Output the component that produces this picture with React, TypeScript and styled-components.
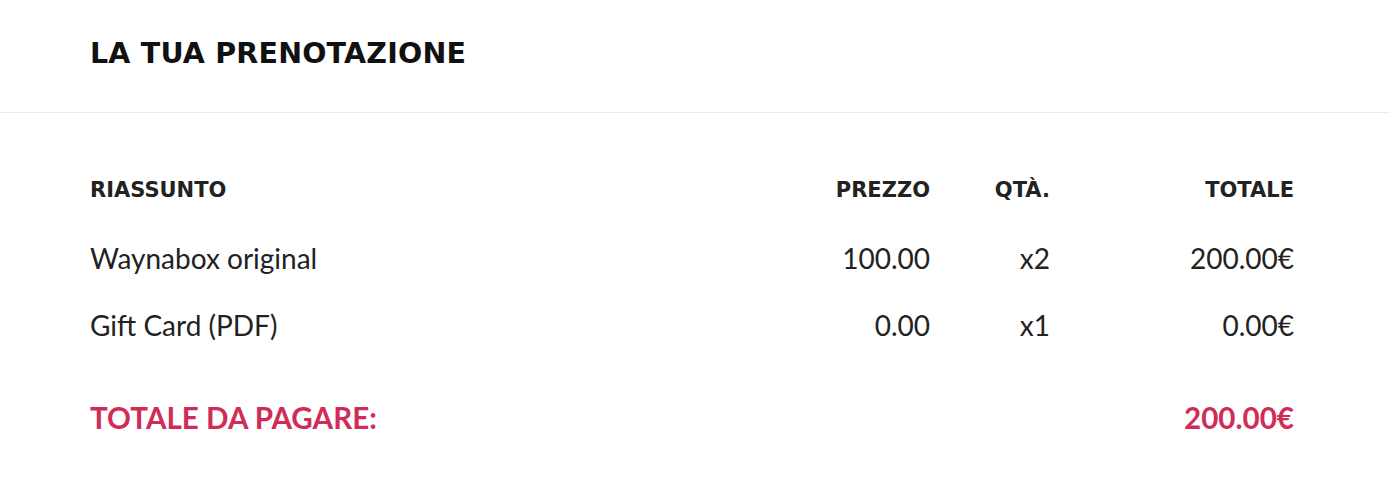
import React from 'react';
import styled, { createGlobalStyle } from 'styled-components';

const GlobalStyle = createGlobalStyle`
  html, body {
    margin: 0;
    padding: 0;
    background: #fff;
  }
  body {
    font-family: Lato, "Liberation Sans", sans-serif;
    color: #222;
  }
`;

const ACCENT = '#d12c57';

const Header = styled.div`
  display: flex;
  align-items: center;
  height: 106px;
  padding: 0 90px 6px;
  border-bottom: 1px solid #ebebeb;
`;

const Title = styled.h1`
  margin: 0;
  font-family: "DejaVu Sans", sans-serif;
  font-weight: 700;
  font-size: 28.5px;
  color: #111;
  letter-spacing: 0.2px;
`;

const Summary = styled.div`
  padding: 53px 96px 0 90px;
`;

const Row = styled.div<{ $kind?: 'head' | 'item' | 'total' }>`
  display: grid;
  grid-template-columns: 1fr 200px 120px 244px;
  align-items: center;
  height: ${p => (p.$kind === 'head' ? 48 : 67)}px;
  margin-bottom: ${p => (p.$kind === 'head' ? 10 : 0)}px;
  margin-top: ${p => (p.$kind === 'total' ? 26 : 0)}px;
`;

const HeadCell = styled.div<{ $right?: boolean }>`
  font-family: "DejaVu Sans", sans-serif;
  font-weight: 700;
  font-size: 21px;
  color: #222;
  text-align: ${p => (p.$right ? 'right' : 'left')};
`;

const Cell = styled.div<{ $right?: boolean }>`
  font-size: 28px;
  color: #222;
  text-align: ${p => (p.$right ? 'right' : 'left')};
`;

const TotalCell = styled.div<{ $right?: boolean }>`
  font-size: 29.6px;
  font-weight: 700;
  color: ${ACCENT};
  grid-column: ${p => (p.$right ? '4' : '1 / 4')};
  text-align: ${p => (p.$right ? 'right' : 'left')};
`;

const items = [
  { name: 'Waynabox original', price: '100.00', qty: 2, total: '200.00€' },
  { name: 'Gift Card (PDF)', price: '0.00', qty: 1, total: '0.00€' },
];

export default function App() {
  return (
    <>
      <GlobalStyle />
      <Header>
        <Title>LA TUA PRENOTAZIONE</Title>
      </Header>
      <Summary>
        <Row $kind="head">
          <HeadCell>RIASSUNTO</HeadCell>
          <HeadCell $right>PREZZO</HeadCell>
          <HeadCell $right>QTÀ.</HeadCell>
          <HeadCell $right>TOTALE</HeadCell>
        </Row>
        {items.map(item => (
          <Row key={item.name} $kind="item">
            <Cell>{item.name}</Cell>
            <Cell $right>{item.price}</Cell>
            <Cell $right>x{item.qty}</Cell>
            <Cell $right>{item.total}</Cell>
          </Row>
        ))}
        <Row $kind="total">
          <TotalCell>TOTALE DA PAGARE:</TotalCell>
          <TotalCell $right>200.00€</TotalCell>
        </Row>
      </Summary>
    </>
  );
}
